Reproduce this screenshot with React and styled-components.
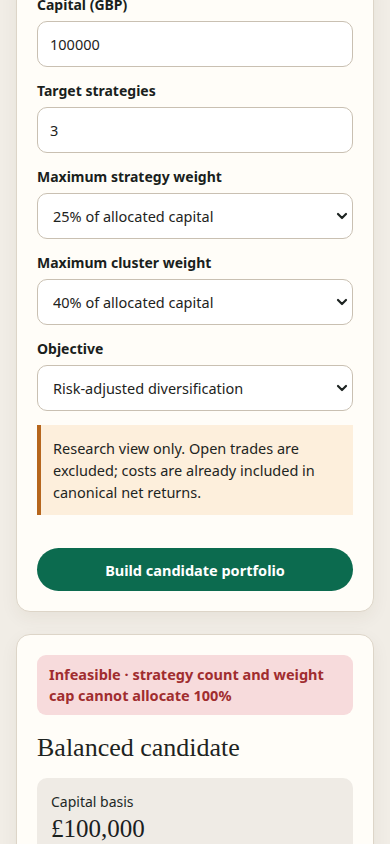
import React, { useState } from 'react';
import styled, { createGlobalStyle } from 'styled-components';

const GlobalStyle = createGlobalStyle`
  html, body {
    margin: 0;
    padding: 0;
    background: #f1ede6;
  }
  body {
    font-family: "Noto Sans", "Open Sans", sans-serif;
    color: #1d2321;
  }
  * { box-sizing: border-box; }
`;

const Page = styled.div`
  display: flex;
  flex-direction: column;
  gap: 22px;
  padding: 0 16px 40px;
  overflow: hidden;
`;

const Card = styled.section`
  background: #fffdf8;
  border: 1px solid #ddd5c8;
  border-radius: 14px;
  box-shadow: 0 6px 18px rgba(60, 45, 20, 0.06);
  padding: 20px;
  display: flex;
  flex-direction: column;
  margin-top: ${({ $clipTop }) => ($clipTop ? '-26px' : '0')};
`;

const CardTitle = styled.h2`
  margin: 0 0 5px;
  font-family: "Liberation Serif", serif;
  font-weight: 400;
  font-size: 26px;
  line-height: 28px;
`;

const Form = styled.form`
  display: flex;
  flex-direction: column;
  gap: 14px;
`;

const Field = styled.label`
  display: flex;
  flex-direction: column;
  gap: 6px;
`;

const LabelText = styled.span`
  font-size: 14px;
  font-weight: 700;
  line-height: 20px;
  color: #1a1f1d;
`;

const Input = styled.input`
  height: 46px;
  width: 100%;
  border: 1px solid #c9c0b2;
  border-radius: 10px;
  background: #ffffff;
  padding: 0 12px;
  font-family: inherit;
  font-size: 14.5px;
  color: #1d2321;
  outline: none;
`;

const SelectWrap = styled.div`
  position: relative;
`;

const Select = styled.select`
  appearance: none;
  height: 46px;
  width: 100%;
  border: 1px solid #c9c0b2;
  border-radius: 10px;
  background: #ffffff;
  padding: 0 30px 0 15px;
  font-family: inherit;
  font-size: 14.5px;
  color: #1d2321;
  outline: none;
`;

const Chevron = styled.svg`
  position: absolute;
  right: 5px;
  top: 50%;
  margin-top: -4px;
  pointer-events: none;
`;

const Notice = styled.div`
  background: #fdefdc;
  border-left: 4px solid #b6661d;
  padding: 12px 16px 12px 12px;
  font-size: 14.5px;
  line-height: 22px;
  color: #1e2522;
`;

const PrimaryButton = styled.button`
  margin-top: 19px;
  height: 43px;
  border: none;
  border-radius: 999px;
  background: #0c6b4f;
  color: #ffffff;
  font-family: inherit;
  font-size: 14.5px;
  font-weight: 700;
  cursor: pointer;
`;

const Alert = styled.div`
  background: #f7dbdc;
  color: #a02d2f;
  border-radius: 9px;
  padding: 9px 12px;
  font-size: 14.5px;
  font-weight: 700;
  line-height: 21px;
  margin-bottom: 19px;
`;

const Stat = styled.div`
  margin-top: 11px;
  background: #efebe5;
  border-radius: 10px;
  padding: 14px 14px 16px;
  display: flex;
  flex-direction: column;
  gap: 2px;
`;

const StatLabel = styled.span`
  font-size: 14px;
  line-height: 20px;
  color: #222826;
`;

const StatValue = styled.span`
  font-family: "Liberation Serif", serif;
  font-size: 25px;
  line-height: 30px;
  color: #1a201e;
`;

const SelectField = ({ label, value, options, onChange }) => (
  <Field>
    <LabelText>{label}</LabelText>
    <SelectWrap>
      <Select value={value} onChange={onChange}>
        {options.map((o) => (
          <option key={o} value={o}>{o}</option>
        ))}
      </Select>
      <Chevron width="12" height="8" viewBox="0 0 12 8">
        <path d="M2 2l4 4 4-4" fill="none" stroke="#1d2321" strokeWidth="2.2" strokeLinecap="round" strokeLinejoin="round" />
      </Chevron>
    </SelectWrap>
  </Field>
);

export default function App() {
  const [capital, setCapital] = useState('100000');
  const [target, setTarget] = useState('3');
  const [stratWeight, setStratWeight] = useState('25% of allocated capital');
  const [clusterWeight, setClusterWeight] = useState('40% of allocated capital');
  const [objective, setObjective] = useState('Risk-adjusted diversification');

  return (
    <>
      <GlobalStyle />
      <Page>
        <Card $clipTop>
          <Form onSubmit={(e) => e.preventDefault()}>
            <Field>
              <LabelText>Capital (GBP)</LabelText>
              <Input value={capital} onChange={(e) => setCapital(e.target.value)} />
            </Field>
            <Field>
              <LabelText>Target strategies</LabelText>
              <Input value={target} onChange={(e) => setTarget(e.target.value)} />
            </Field>
            <SelectField
              label="Maximum strategy weight"
              value={stratWeight}
              onChange={(e) => setStratWeight(e.target.value)}
              options={['15% of allocated capital', '25% of allocated capital', '35% of allocated capital']}
            />
            <SelectField
              label="Maximum cluster weight"
              value={clusterWeight}
              onChange={(e) => setClusterWeight(e.target.value)}
              options={['30% of allocated capital', '40% of allocated capital', '50% of allocated capital']}
            />
            <SelectField
              label="Objective"
              value={objective}
              onChange={(e) => setObjective(e.target.value)}
              options={['Risk-adjusted diversification', 'Maximum return', 'Minimum drawdown']}
            />
            <Notice>
              Research view only. Open trades are excluded; costs are already included in canonical net returns.
            </Notice>
            <PrimaryButton type="submit">Build candidate portfolio</PrimaryButton>
          </Form>
        </Card>

        <Card>
          <Alert>Infeasible · strategy count and weight cap cannot allocate 100%</Alert>
          <CardTitle>Balanced candidate</CardTitle>
          <Stat>
            <StatLabel>Capital basis</StatLabel>
            <StatValue>£100,000</StatValue>
          </Stat>
        </Card>
      </Page>
    </>
  );
}
